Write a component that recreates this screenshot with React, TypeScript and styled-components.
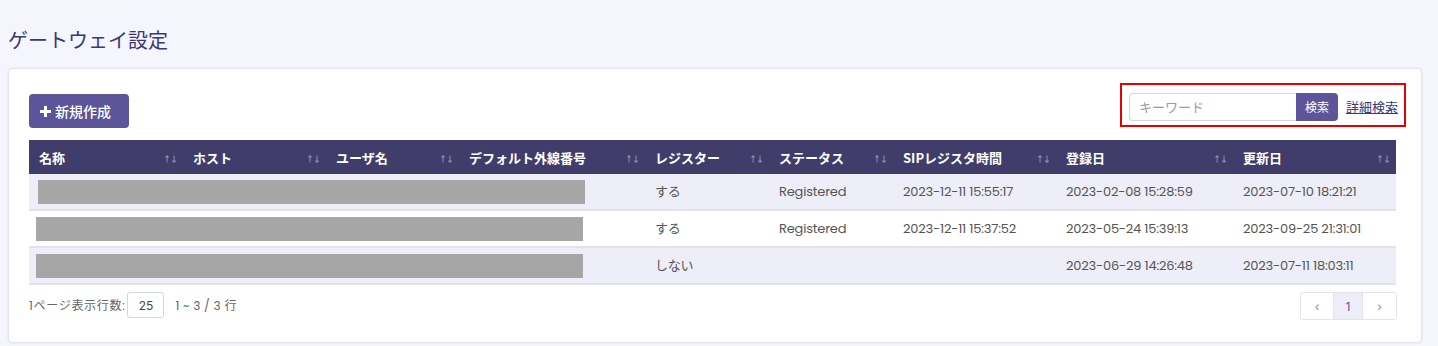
import React from "react";
import styled, { createGlobalStyle } from "styled-components";

const Global = createGlobalStyle`
  html, body { margin: 0; padding: 0; background: #f5f5fd; }
  body { font-family: "Inter", "Noto Sans CJK JP", sans-serif; }
`;

const Page = styled.div`
  padding: 26px 17px 4px 9px;
  height: 346px;
  box-sizing: border-box;
`;

const Title = styled.h1`
  margin: 0 0 16px -1px;
  font-weight: 400;
  font-size: 20px;
  line-height: 27px;
  color: #3b3874;
  font-family: "Noto Sans CJK JP", sans-serif;
`;

const Card = styled.div`
  background: #fff;
  border-radius: 4px;
  box-shadow: 0 0 3px rgba(60, 60, 110, 0.25);
  padding: 14px 24px 22px 20px;
  height: 273px;
  box-sizing: border-box;
`;

const Toolbar = styled.div`
  display: flex;
  justify-content: space-between;
  align-items: flex-start;
  height: 57px;
`;

const PrimaryButton = styled.button`
  margin-top: 11px;
  display: flex;
  align-items: center;
  gap: 3px;
  height: 34px;
  width: 100px;
  padding: 0 0 0 10px;
  border: none;
  border-radius: 4px;
  background: #5c5599;
  color: #fff;
  font-family: "Noto Sans CJK JP", sans-serif;
  font-size: 14px;
  font-weight: 500;
`;

const SearchBox = styled.div`
  display: flex;
  align-items: center;
  border: 2px solid #e60000;
  width: 286px;
  height: 44px;
  box-sizing: border-box;
  padding: 3px 0 0 7px;
  margin-right: -9px;
`;

const SearchInput = styled.input`
  width: 167px;
  height: 28px;
  box-sizing: border-box;
  border: 1px solid #d3d6de;
  border-right: none;
  border-radius: 4px 0 0 4px;
  padding: 0 9px;
  font-family: "Noto Sans CJK JP", sans-serif;
  font-size: 13px;
  outline: none;
  &::placeholder { color: #9a9aa4; }
`;

const SearchButton = styled.button`
  height: 28px;
  width: 42px;
  border: none;
  border-radius: 0 4px 4px 0;
  background: #5c5599;
  color: #fff;
  font-family: "Noto Sans CJK JP", sans-serif;
  font-size: 12px;
  padding: 0;
`;

const DetailLink = styled.a`
  margin-left: 8px;
  color: #3b3874;
  font-family: "Noto Sans CJK JP", sans-serif;
  font-size: 13px;
  text-decoration: underline;
`;

const Table = styled.table`
  width: 1367px;
  border-collapse: collapse;
  table-layout: fixed;
  font-size: 13px;
`;

const Th = styled.th`
  background: #413d6b;
  color: #fff;
  height: 34px;
  padding: 0 8px 0 10px;
  text-align: left;
  font-family: "Noto Sans CJK JP", sans-serif;
  font-weight: 700;
  font-size: 13px;
  position: relative;
`;

const SortIcon = styled.span`
  position: absolute;
  right: 6px;
  top: 13px;
  font-size: 8px;
  color: #9896ba;
  letter-spacing: -1px;
`;

const Tr = styled.tr<{ $striped?: boolean }>`
  background: ${(p) => (p.$striped ? "#eeeef8" : "#fff")};
  border-bottom: 2px solid #e2e2ea;
`;

const Td = styled.td`
  height: 35px;
  padding: 0 10px;
  color: #555;
  font-family: "Poppins", "Inter", "Noto Sans CJK JP", sans-serif;
  font-size: 13px;
  white-space: nowrap;
  letter-spacing: -0.2px;
`;

const NameCell = styled(Td)`
  padding-left: 9px;
`;

const Redacted = styled.div<{ $offset: number }>`
  height: 24px;
  width: 547px;
  margin-left: ${(p) => p.$offset}px;
  background: #a6a6a6;
`;

const Footer = styled.div`
  display: flex;
  justify-content: space-between;
  align-items: center;
  margin-top: 5px;
`;

const PageSize = styled.div`
  display: flex;
  align-items: center;
  color: #666;
  font-family: "Poppins", "Noto Sans CJK JP", sans-serif;
  font-size: 12px;
`;

const SizeLabel = styled.span`
  letter-spacing: 0.7px;
`;

const SizeBox = styled.div`
  margin-left: 2px;
  width: 37px;
  height: 26px;
  box-sizing: border-box;
  border: 1px solid #d3d6de;
  border-radius: 3px;
  display: flex;
  align-items: center;
  justify-content: center;
  font-family: "Inter", sans-serif;
  font-size: 12px;
  color: #444;
`;

const RangeText = styled.span`
  margin-left: 11px;
  font-size: 12px;
  letter-spacing: 0.3px;
`;

const Pager = styled.div`
  display: flex;
  border: 1px solid #e4e4ee;
  border-radius: 3px;
  height: 28px;
  box-sizing: border-box;
  overflow: hidden;
  margin-top: 2px;
`;

const PageBtn = styled.div<{ $active?: boolean; $w: number }>`
  width: ${(p) => p.$w}px;
  display: flex;
  align-items: center;
  justify-content: center;
  background: ${(p) => (p.$active ? "#eeeef8" : "#fff")};
  color: ${(p) => (p.$active ? "#5c5599" : "#8a8aa0")};
  border-left: ${(p) => (p.$active ? "1px solid #e4e4ee" : "none")};
  border-right: ${(p) => (p.$active ? "1px solid #e4e4ee" : "none")};
  font-family: "Inter", sans-serif;
  font-size: 12px;
`;

const cols: [string, number][] = [
  ["名称", 154],
  ["ホスト", 143],
  ["ユーザ名", 133],
  ["デフォルト外線番号", 186],
  ["レジスター", 124],
  ["ステータス", 124],
  ["SIPレジスタ時間", 163],
  ["登録日", 177],
  ["更新日", 163],
];

const rows = [
  { off: 0, reg: "する", status: "Registered", sip: "2023-12-11 15:55:17", created: "2023-02-08 15:28:59", updated: "2023-07-10 18:21:21" },
  { off: -2, reg: "する", status: "Registered", sip: "2023-12-11 15:37:52", created: "2023-05-24 15:39:13", updated: "2023-09-25 21:31:01" },
  { off: -2, reg: "しない", status: "", sip: "", created: "2023-06-29 14:26:48", updated: "2023-07-11 18:03:11" },
];

export default function App() {
  return (
    <>
      <Global />
      <Page>
        <Title>ゲートウェイ設定</Title>
        <Card>
          <Toolbar>
            <PrimaryButton>
              <svg width="13" height="13" viewBox="0 0 13 13">
                <path d="M6.5 1v11M1 6.5h11" stroke="#fff" strokeWidth="3" />
              </svg>
              新規作成
            </PrimaryButton>
            <SearchBox>
              <SearchInput placeholder="キーワード" />
              <SearchButton>検索</SearchButton>
              <DetailLink href="#">詳細検索</DetailLink>
            </SearchBox>
          </Toolbar>
          <Table>
            <colgroup>
              {cols.map(([n, w]) => (
                <col key={n} style={{ width: w }} />
              ))}
            </colgroup>
            <thead>
              <tr>
                {cols.map(([n]) => (
                  <Th key={n}>
                    {n}
                    <SortIcon>↑↓</SortIcon>
                  </Th>
                ))}
              </tr>
            </thead>
            <tbody>
              {rows.map((r, i) => (
                <Tr key={i} $striped={i % 2 === 0}>
                  <NameCell colSpan={4}>
                    <Redacted $offset={r.off} />
                  </NameCell>
                  <Td>{r.reg}</Td>
                  <Td>{r.status}</Td>
                  <Td>{r.sip}</Td>
                  <Td>{r.created}</Td>
                  <Td>{r.updated}</Td>
                </Tr>
              ))}
            </tbody>
          </Table>
          <Footer>
            <PageSize>
              <SizeLabel>1ページ表示行数:</SizeLabel>
              <SizeBox>25</SizeBox>
              <RangeText>1 ~ 3 / 3 行</RangeText>
            </PageSize>
            <Pager>
              <PageBtn $w={32}>‹</PageBtn>
              <PageBtn $w={28} $active>1</PageBtn>
              <PageBtn $w={33}>›</PageBtn>
            </Pager>
          </Footer>
        </Card>
      </Page>
    </>
  );
}
